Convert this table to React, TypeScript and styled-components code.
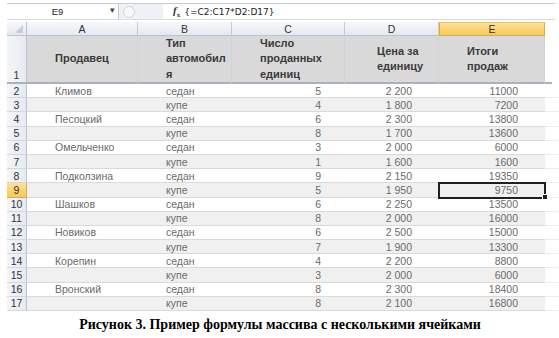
import styled, { createGlobalStyle, css } from "styled-components";

type Row = {
  name?: string;
  kind: string;
  qty: number;
  price: string;
  total: number;
};

const rows: Row[] = [
  { name: "Климов", kind: "седан", qty: 5, price: "2 200", total: 11000 },
  { kind: "купе", qty: 4, price: "1 800", total: 7200 },
  { name: "Песоцкий", kind: "седан", qty: 6, price: "2 300", total: 13800 },
  { kind: "купе", qty: 8, price: "1 700", total: 13600 },
  { name: "Омельченко", kind: "седан", qty: 3, price: "2 000", total: 6000 },
  { kind: "купе", qty: 1, price: "1 600", total: 1600 },
  { name: "Подколзина", kind: "седан", qty: 9, price: "2 150", total: 19350 },
  { kind: "купе", qty: 5, price: "1 950", total: 9750 },
  { name: "Шашков", kind: "седан", qty: 6, price: "2 250", total: 13500 },
  { kind: "купе", qty: 8, price: "2 000", total: 16000 },
  { name: "Новиков", kind: "седан", qty: 6, price: "2 500", total: 15000 },
  { kind: "купе", qty: 7, price: "1 900", total: 13300 },
  { name: "Корепин", kind: "седан", qty: 4, price: "2 200", total: 8800 },
  { kind: "купе", qty: 3, price: "2 000", total: 6000 },
  { name: "Вронский", kind: "седан", qty: 8, price: "2 300", total: 18400 },
  { kind: "купе", qty: 8, price: "2 100", total: 16800 },
];

const SELECTED_ROW = 9;

const GlobalStyle = createGlobalStyle`
  body {
    margin: 0;
    background: #fff;
    font-family: "Liberation Sans", Arial, sans-serif;
  }
`;

const App = () => {
  return (
    <>
      <GlobalStyle />
      <Page>
        <FormulaBar>
          <NameBox>
            <span>E9</span>
            <Arrow>▾</Arrow>
          </NameBox>
          <Buttons>
            <Circle />
          </Buttons>
          <Input>
            <Fx>
              <i>f</i>
              <sub>x</sub>
            </Fx>
            <span>{"{=C2:C17*D2:D17}"}</span>
          </Input>
        </FormulaBar>

        <Sheet>
          <Corner>
            <svg width="8" height="8" viewBox="0 0 8 8">
              <path d="M8 0 L8 8 L0 8 Z" fill="#c9ced6" />
            </svg>
          </Corner>
          <ColHead>A</ColHead>
          <ColHead>B</ColHead>
          <ColHead>C</ColHead>
          <ColHead>D</ColHead>
          <ColHead selected>E</ColHead>
          <Blank />

          <RowHead tall>1</RowHead>
          <HeadCell>Продавец</HeadCell>
          <HeadCell>
            Тип
            <br />
            автомобил
            <br />я
          </HeadCell>
          <HeadCell>
            Число
            <br />
            проданных
            <br />
            единиц
          </HeadCell>
          <HeadCell shift={4}>
            Цена за
            <br />
            единицу
          </HeadCell>
          <HeadCell>
            Итоги
            <br />
            продаж
          </HeadCell>
          <Blank header />

          {rows.map((r, i) => {
            const n = i + 2;
            const band = n % 2 === 1;
            return (
              <RowGroup key={n}>
                <RowHead selected={n === SELECTED_ROW}>{n}</RowHead>
                <Cell band={band}>{r.name ?? ""}</Cell>
                <Cell band={band}>{r.kind}</Cell>
                <Cell band={band} num pad={24}>
                  {r.qty}
                </Cell>
                <Cell band={band} num pad={27}>
                  {r.price}
                </Cell>
                <Cell band={band} num pad={27} active={n === SELECTED_ROW}>
                  {r.total}
                  {n === SELECTED_ROW && <Handle />}
                </Cell>
                <Cell band={band} trailing />
              </RowGroup>
            );
          })}
        </Sheet>

        <Caption>Рисунок 3. Пример формулы массива с несколькими ячейками</Caption>
      </Page>
    </>
  );
};

export default App;

const Page = styled.div`
  width: 559px;
  height: 338px;
  padding: 3px 4px 0 7px;
  box-sizing: border-box;
  overflow: hidden;
`;

const FormulaBar = styled.div`
  display: flex;
  height: 15px;
  border-top: 1px solid #c6ccd4;
  border-bottom: 1px solid #d7dce3;
  background: #eef1f5;
  font-size: 9.5px;
  color: #222;
  margin-bottom: 2px;
`;

const NameBox = styled.div`
  width: 111px;
  display: flex;
  align-items: center;
  justify-content: center;
  position: relative;
  background: #fff;
  border-right: 1px solid #c6ccd4;
  span {
    margin-left: -10px;
  }
`;

const Arrow = styled.div`
  position: absolute;
  right: 3px;
  top: 1px;
  font-size: 9px;
  color: #444;
`;

const Buttons = styled.div`
  width: 40px;
  display: flex;
  align-items: center;
  padding-left: 4px;
`;

const Circle = styled.div`
  width: 10px;
  height: 10px;
  border-radius: 50%;
  border: 1px solid #cfd5dd;
  background: #f7f8fa;
`;

const Input = styled.div`
  flex: 1;
  display: flex;
  align-items: center;
  gap: 4px;
  background: #fff;
  padding-left: 10px;
  font-family: "DejaVu Sans", "Liberation Sans", sans-serif;
  font-size: 9px;
  color: #222;
`;

const Fx = styled.span`
  font-family: "Liberation Serif", serif;
  font-weight: bold;
  font-size: 11px;
  color: #333;
  sub {
    font-size: 7px;
  }
`;

const Sheet = styled.div`
  display: grid;
  grid-template-columns: 20px 111px 94px 113px 94px 106px 7px;
  grid-template-rows: 14px 48px repeat(16, 14.2px);
  font-size: 10.5px;
`;

const RowGroup = styled.div`
  display: contents;
`;

const headBase = css`
  background: linear-gradient(#f6f8fb, #e4e9f0);
  color: #333;
  display: flex;
  align-items: center;
  justify-content: center;
  box-sizing: border-box;
`;

const Corner = styled.div`
  ${headBase};
  border-right: 1px solid #b9c3cf;
  border-bottom: 1px solid #b9c3cf;
  align-items: flex-end;
  justify-content: flex-end;
  padding: 0 3px 2px 0;
`;

const ColHead = styled.div<{ selected?: boolean }>`
  ${headBase};
  border-right: 1px solid #c3cbd6;
  border-bottom: 1px solid #b9c3cf;
  font-size: 10.5px;
  ${({ selected }) =>
    selected &&
    css`
      background: linear-gradient(#fbe09c, #f5c956);
      border: 1px solid #e8a83a;
      border-top-color: #f2c46b;
    `}
`;

const RowHead = styled.div<{ selected?: boolean; tall?: boolean }>`
  ${headBase};
  background: linear-gradient(90deg, #f3f5f8, #e6eaf0);
  border-right: 1px solid #b9c3cf;
  border-bottom: 1px solid #d2d8e0;
  font-size: 10.5px;
  ${({ tall }) =>
    tall &&
    css`
      align-items: flex-end;
      padding-bottom: 1px;
      border-bottom: 2px solid #a9b1bb;
    `}
  ${({ selected }) =>
    selected &&
    css`
      background: linear-gradient(#fbe09c, #f5c956);
      border-bottom: 1px solid #e8a83a;
      border-right-color: #e8a83a;
    `}
`;

const Blank = styled.div<{ header?: boolean }>`
  background: #fff;
  ${({ header }) =>
    header &&
    css`
      border-bottom: 2px solid #a9b1bb;
    `}
`;

const HeadCell = styled.div<{ shift?: number }>`
  background: #d9d9d9;
  border-bottom: 2px solid #a9b1bb;
  border-right: 1px solid #d3d3d3;
  display: flex;
  align-items: center;
  padding-left: ${({ shift = 0 }) => 28 + shift}px;
  font-weight: bold;
  font-size: 11px;
  line-height: 15.5px;
  color: #3a3a3a;
  box-sizing: border-box;
`;

const Cell = styled.div<{
  band?: boolean;
  num?: boolean;
  pad?: number;
  active?: boolean;
  trailing?: boolean;
}>`
  position: relative;
  background: ${({ band }) => (band ? "#f0f0f0" : "#fff")};
  border-bottom: 1px solid #d9d9d9;
  display: flex;
  align-items: center;
  box-sizing: border-box;
  color: #6b6b6b;
  white-space: nowrap;
  justify-content: ${({ num }) => (num ? "flex-end" : "flex-start")};
  padding: ${({ num, pad = 0 }) => (num ? `0 ${pad}px 0 0` : "0 0 0 28px")};
  ${({ trailing }) =>
    trailing &&
    css`
      background: #fff;
      border-bottom-color: #eee;
    `}
  ${({ active }) =>
    active &&
    css`
      outline: 2px solid #1f1f1f;
      outline-offset: -1px;
      z-index: 1;
    `}
`;

const Handle = styled.span`
  position: absolute;
  right: -3px;
  bottom: -3px;
  width: 4px;
  height: 4px;
  background: #1f1f1f;
  border: 1px solid #fff;
`;

const Caption = styled.div`
  margin-top: 6px;
  text-align: center;
  padding-right: 2px;
  font-family: "Liberation Serif", "Times New Roman", serif;
  font-weight: bold;
  font-size: 14px;
  color: #000;
`;
